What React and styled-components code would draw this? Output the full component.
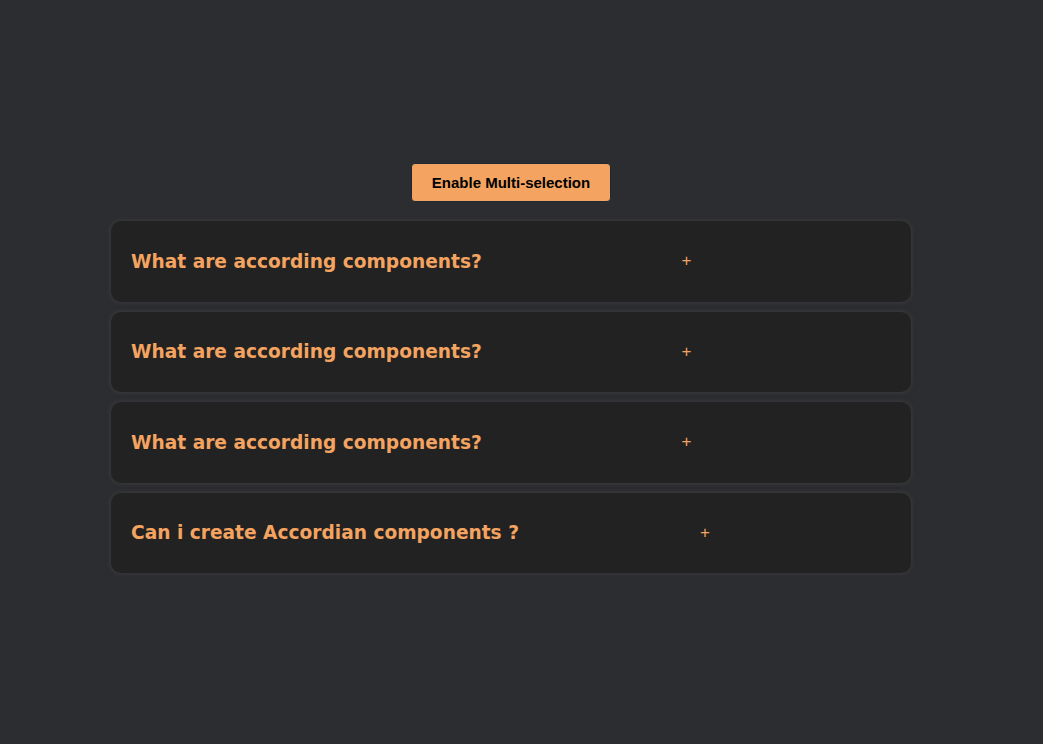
import React, { useState } from 'react';
import styled, { createGlobalStyle } from 'styled-components';

const GlobalStyle = createGlobalStyle`
  html, body {
    margin: 0;
    padding: 0;
    background-color: #2c2d30;
  }
  body {
    font-family: "Liberation Sans", Arial, sans-serif;
  }
`;

const Page = styled.div`
  min-height: 744px;
  box-sizing: border-box;
  padding: 163px 0 0 111px;
`;

const Wrapper = styled.div`
  width: 800px;
  display: flex;
  flex-direction: column;
  align-items: center;
  gap: 10px;
`;

const ToggleButton = styled.button`
  width: 200px;
  height: 39px;
  margin-bottom: 9px;
  background-color: #f4a460;
  color: #000;
  border: 1px solid #1c2b33;
  border-radius: 4px;
  font-family: "Liberation Sans", Arial, sans-serif;
  font-weight: bold;
  font-size: 15px;
  cursor: pointer;
`;

const Item = styled.div`
  width: 800px;
  box-sizing: border-box;
  background-color: #222222;
  border-radius: 10px;
  box-shadow: 0 0 4px 1px rgba(60, 60, 62, 0.9);
`;

const ItemHeader = styled.div`
  display: flex;
  align-items: center;
  height: 80.5px;
  padding: 0 20px;
  cursor: pointer;
`;

const Question = styled.h3`
  margin: 0;
  color: #f4a460;
  font-family: "DejaVu Sans", Verdana, sans-serif;
  font-weight: bold;
  font-size: 18.6px;
`;

const Sign = styled.span`
  flex: 1;
  text-align: center;
  color: #f4a460;
  font-family: "Liberation Sans", Arial, sans-serif;
  font-size: 17px;
`;

const Answer = styled.div`
  padding: 0 20px 20px;
  color: #f4a460;
  font-family: "DejaVu Sans", Verdana, sans-serif;
  font-size: 14px;
`;

const data = [
  { id: 1, question: 'What are according components?', answer: 'Accordion components let users show and hide sections of related content.' },
  { id: 2, question: 'What are according components?', answer: 'Accordion components let users show and hide sections of related content.' },
  { id: 3, question: 'What are according components?', answer: 'Accordion components let users show and hide sections of related content.' },
  { id: 4, question: 'Can i create Accordian components ?', answer: 'Yes, with a little state and some styling.' },
];

export default function App() {
  const [multi, setMulti] = useState(false);
  const [open, setOpen] = useState([]);

  const toggle = (id) => {
    if (multi) {
      setOpen(open.includes(id) ? open.filter(x => x !== id) : [...open, id]);
    } else {
      setOpen(open.includes(id) ? [] : [id]);
    }
  };

  return (
    <>
      <GlobalStyle />
      <Page>
        <Wrapper>
          <ToggleButton onClick={() => setMulti(!multi)}>
            {multi ? 'Disable Multi-selection' : 'Enable Multi-selection'}
          </ToggleButton>
          {data.map(item => (
            <Item key={item.id}>
              <ItemHeader onClick={() => toggle(item.id)}>
                <Question>{item.question}</Question>
                <Sign>{open.includes(item.id) ? '-' : '+'}</Sign>
              </ItemHeader>
              {open.includes(item.id) && <Answer>{item.answer}</Answer>}
            </Item>
          ))}
        </Wrapper>
      </Page>
    </>
  );
}
